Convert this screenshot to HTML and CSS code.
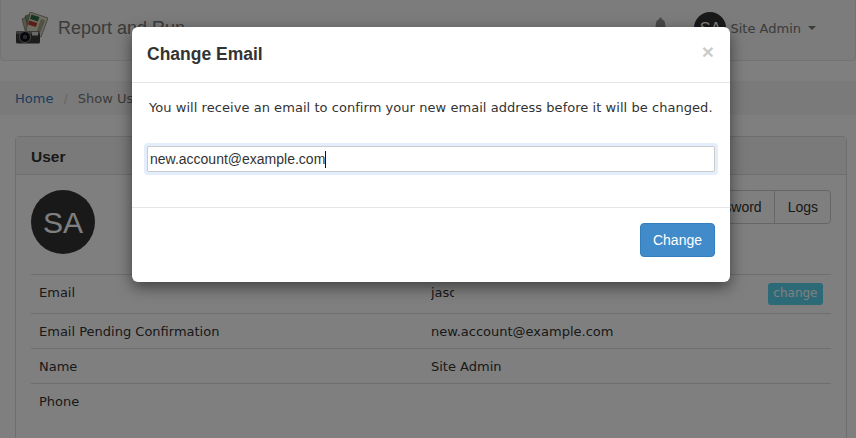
FILE: index.html
```html
<!DOCTYPE html>
<html lang="en">
<head>
  <meta charset="UTF-8" />
  <title>Report and Run</title>
  <link rel="stylesheet" href="styles.css">
</head>
<body>
  <nav class="navbar">
    <a class="brand" href="#">
      <svg class="brand-logo" viewBox="0 0 32 32" xmlns="http://www.w3.org/2000/svg">
        <path d="M6 7l5-2 4 15-5 2z" fill="#b9b08a" stroke="#444" stroke-width=".5"/>
        <path d="M9 4l6-2 4 16-6 2z" fill="#7f9a6c" stroke="#444" stroke-width=".5"/>
        <path d="M14 0l18 6-7 19-15-6z" fill="#d9d8bf" stroke="#555" stroke-width=".6"/>
        <path d="M15.500 2.500l8 2.600-1.600 4.400-8-2.600z" fill="#2f6b45"/>
        <path d="M13.300 8.500l8 2.600-1.500 4-7.900-2.600z" fill="#b5382f"/>
        <path d="M25 7l4 1.300-5 13.500-3.800-1.400z" fill="#a3a38c"/>
        <rect x="0" y="19" width="24" height="12.500" rx="1.500" fill="#3b3b3b"/>
        <rect x="0" y="19" width="24" height="3" rx="1.500" fill="#777"/>
        <rect x="16" y="20" width="6" height="3.500" fill="#d5d5d5"/>
        <circle cx="9" cy="25" r="5.500" fill="#0e0e0e" stroke="#8a8a8a" stroke-width="1"/>
        <circle cx="9" cy="25" r="2.200" fill="#50506a"/>
      </svg>
      <span>Report and Run</span>
    </a>
    <div class="nav-right">
      <svg class="bell" viewBox="0 0 14 16" xmlns="http://www.w3.org/2000/svg">
        <path d="M7 0a1.500 1.500 0 0 1 1.500 1.700C11 2.400 12 4.500 12 7c0 3 .8 4.500 2 5.500H0C1.200 11.500 2 10 2 7c0-2.500 1-4.600 3.500-5.300A1.500 1.500 0 0 1 7 0z"/>
        <path d="M5 13.500h4a2 2 0 0 1-4 0z"/>
      </svg>
      <div class="user-menu">
        <span class="avatar avatar-sm">SA</span>
        <span class="user-name">Site Admin</span>
        <span class="caret"></span>
      </div>
    </div>
  </nav>

  <ol class="breadcrumb">
    <li><a href="#">Home</a></li>
    <li class="sep">/</li>
    <li>Show User</li>
  </ol>

  <section class="panel">
    <div class="panel-heading">User</div>
    <div class="panel-body">
      <div class="user-top">
        <span class="avatar avatar-lg">SA</span>
        <div class="btn-group">
          <a class="btn" href="#">Change Password</a>
          <a class="btn" href="#">Logs</a>
        </div>
      </div>
      <table class="details">
        <tr class="first">
          <td class="label">Email</td>
          <td><span class="value-cut">jaso</span></td>
          <td class="action"><a class="btn-change" href="#">change</a></td>
        </tr>
        <tr>
          <td class="label">Email Pending Confirmation</td>
          <td>new.account@example.com</td>
          <td></td>
        </tr>
        <tr>
          <td class="label">Name</td>
          <td>Site Admin</td>
          <td></td>
        </tr>
        <tr>
          <td class="label">Phone</td>
          <td></td>
          <td></td>
        </tr>
      </table>
    </div>
  </section>

  <div class="backdrop"></div>

  <div class="modal">
    <div class="modal-header">
      <h4>Change Email</h4>
      <span class="close">&times;</span>
    </div>
    <div class="modal-body">
      <p>You will receive an email to confirm your new email address before it will be changed.</p>
      <div class="input-fake">new.account@example.com<span class="cursor"></span></div>
    </div>
    <div class="modal-footer">
      <a class="btn-primary" href="#">Change</a>
    </div>
  </div>
</body>
</html>
```

FILE: styles.css
```css
* {
  box-sizing: border-box;
}
html, body {
  height: 100%;
}
body {
  margin: 0;
  height: 438px;
  overflow: hidden;
  font-family: "DejaVu Sans", Verdana, sans-serif;
  font-size: 13px;
  line-height: 19px;
  color: #333;
  background: #fff;
  position: relative;
}
a {
  color: #337ab7;
  text-decoration: none;
}

/* navbar */
.navbar {
  height: 61px;
  background: #f8f8f8;
  border: 1px solid #e7e7e7;
  border-top: 0;
  border-radius: 0 0 4px 4px;
  display: flex;
  justify-content: space-between;
  padding: 12px 39px 0 15px;
}
.brand {
  display: flex;
  align-items: flex-start;
  gap: 10px;
  color: #777;
  font-family: "Liberation Sans", Arial, sans-serif;
  font-size: 18px;
  line-height: 32px;
}
.brand-logo {
  width: 32px;
  height: 32px;
}
.nav-right {
  display: flex;
  align-items: flex-start;
  gap: 27px;
}
.bell {
  width: 13px;
  height: 18px;
  margin-top: 4px;
  fill: #919191;
}
.user-menu {
  display: flex;
  align-items: center;
  color: #777;
  height: 32px;
}
.avatar {
  display: inline-flex;
  align-items: center;
  justify-content: center;
  border-radius: 50%;
  background: #333;
  color: #fff;
  font-family: "Liberation Sans", Arial, sans-serif;
}
.avatar-sm {
  width: 32px;
  height: 32px;
  font-size: 16px;
  margin-right: 4px;
}
.avatar-lg {
  width: 64px;
  height: 64px;
  font-size: 30px;
}
.caret {
  width: 0;
  height: 0;
  margin-left: 7px;
  border-top: 4px solid #777;
  border-left: 4px solid transparent;
  border-right: 4px solid transparent;
}

/* breadcrumb */
.breadcrumb {
  list-style: none;
  margin: 20px 0 21px;
  height: 34px;
  padding: 8px 15px;
  background: #f5f5f5;
  display: flex;
  gap: 10px;
  color: #777;
}
.breadcrumb .sep {
  color: #ccc;
}

/* panel */
.panel {
  margin: 0 9px 0 15px;
  height: 320px;
  border: 1px solid #ddd;
  border-radius: 4px;
}
.panel-heading {
  height: 38px;
  padding: 10px 15px 8px;
  background: #f5f5f5;
  border-bottom: 1px solid #ddd;
  font-family: "Liberation Sans", Arial, sans-serif;
  font-size: 15.500px;
  font-weight: 700;
  line-height: 20px;
  color: #333;
}
.panel-body {
  padding: 15px;
}
.user-top {
  display: flex;
  justify-content: space-between;
  align-items: flex-start;
  height: 84px;
}
.btn-group {
  display: flex;
}
.btn {
  display: block;
  padding: 6px 12px;
  height: 34px;
  background: #fff;
  border: 1px solid #ccc;
  color: #333;
  font-family: "Liberation Sans", Arial, sans-serif;
  font-size: 14px;
  line-height: 20px;
}
.btn:first-child {
  border-radius: 4px 0 0 4px;
}
.btn:last-child {
  margin-left: -1px;
  padding-left: 13px;
  border-radius: 0 4px 4px 0;
}

/* details table */
.details {
  width: 100%;
  border-collapse: collapse;
  table-layout: fixed;
}
.details td {
  height: 35px;
  padding: 8px 8px 7px;
  border-top: 1px solid #ddd;
  vertical-align: top;
  white-space: nowrap;
}
.details tr.first td {
  height: 39px;
  padding-bottom: 11px;
}
.details .label {
  width: 392px;
}
.details tr.first .action {
  width: 72px;
  padding: 8px 8px 0 0;
  text-align: right;
}
.value-cut {
  display: inline-block;
  width: 23px;
  overflow: hidden;
  vertical-align: top;
}
.btn-change {
  display: inline-block;
  height: 22px;
  padding: 1px 5.500px;
  border-radius: 3px;
  background: #5ad4f0;
  color: #fff;
  font-size: 12px;
  line-height: 19px;
  vertical-align: top;
}

/* modal */
.backdrop {
  position: absolute;
  inset: 0;
  background: rgba(0, 0, 0, 0.5);
}
.modal {
  position: absolute;
  left: 132px;
  top: 27px;
  width: 598px;
  height: 255px;
  background: #fff;
  border-radius: 6px;
  box-shadow: 0 5px 15px rgba(0, 0, 0, 0.5);
}
.modal-header {
  height: 56px;
  padding: 15px;
  border-bottom: 1px solid #e5e5e5;
  display: flex;
  justify-content: space-between;
}
.modal-header h4 {
  margin: 0;
  font-family: "Liberation Sans", Arial, sans-serif;
  font-size: 17.500px;
  font-weight: 700;
  line-height: 25px;
  color: #333;
}
.close {
  margin: -1px 1px 0 0;
  font-family: "Liberation Sans", Arial, sans-serif;
  font-size: 21px;
  font-weight: 700;
  line-height: 21px;
  color: #000;
  opacity: 0.2;
}
.modal-body {
  height: 125px;
  padding: 15px;
  border-bottom: 1px solid #e5e5e5;
}
.modal-body p {
  margin: 0 2px 29px;
  letter-spacing: 0.05px;
  color: #333;
}
.input-fake {
  height: 26px;
  padding: 0 2px;
  background: #fff;
  border: 1px solid #ccc;
  outline: 3px solid #e3edfb;
  border-radius: 1px;
  color: #333;
  font-family: "Liberation Sans", Arial, sans-serif;
  font-size: 14px;
  line-height: 24px;
  display: flex;
  align-items: center;
}
.cursor {
  width: 1px;
  height: 17px;
  background: #111;
}
.modal-footer {
  display: flex;
  justify-content: flex-end;
  padding: 15px;
}
.btn-primary {
  display: block;
  height: 34px;
  padding: 6px 12px;
  background: #428bca;
  border: 1px solid #357ebd;
  border-radius: 4px;
  color: #fff;
  font-family: "Liberation Sans", Arial, sans-serif;
  font-size: 14px;
  line-height: 20px;
}
```
